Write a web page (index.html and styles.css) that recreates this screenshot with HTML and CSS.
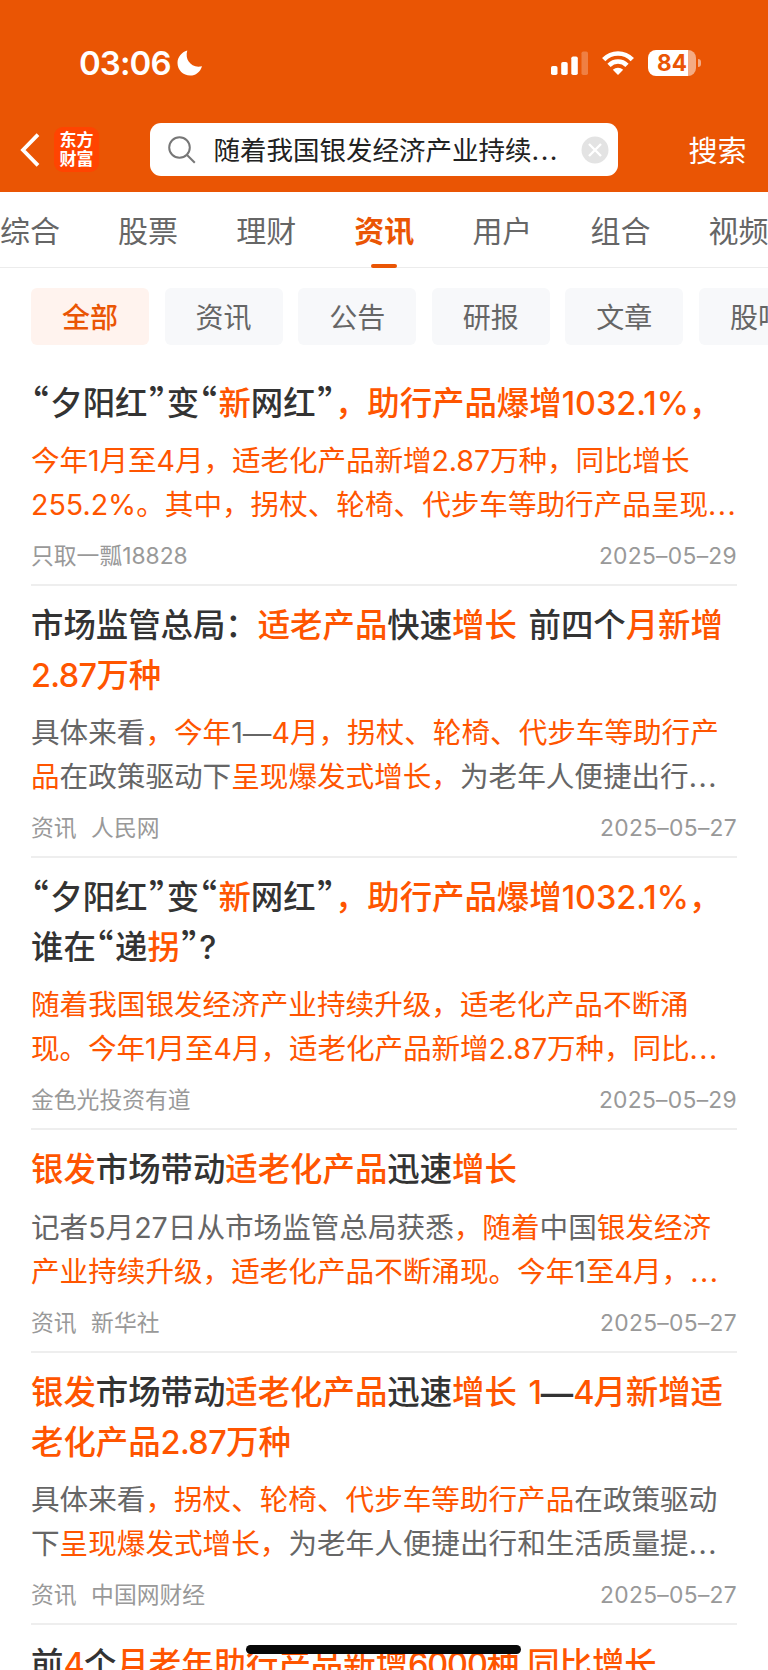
FILE: index.html
```html
<!DOCTYPE html>
<html lang="zh-CN">
<head>
<meta charset="utf-8">
<title>搜索资讯</title>
<link rel="stylesheet" href="styles.css">
</head>
<body>
<div class="screen">
<header class="header">
  <div class="status">
    <span class="clock">03:06</span>
    <svg class="moon" width="26" height="26" viewBox="0 0 26 26"><path d="M10.300.6C7.400 9.800 14.500 18.800 25 16.200 23.300 22 18.700 25.500 13.200 25.500 6.200 25.500.5 20 .5 13 .5 7.300 4.500 2.300 10.300.6Z" fill="#fff"/></svg>
    <svg class="signal" width="38" height="24" viewBox="0 0 38 24" fill="#fff"><rect x="0" y="15" width="6.500" height="9" rx="1.800"/><rect x="10.200" y="11" width="6.500" height="13" rx="1.800"/><rect x="20.300" y="5.500" width="6.500" height="18.500" rx="1.800"/><rect x="30.500" y="0.500" width="6.500" height="23.500" rx="1.800" opacity=".25"/></svg>
    <svg class="wifi" width="32" height="24" viewBox="0 0 32 24" fill="none" stroke="#fff" stroke-width="4.600"><path d="M1.700 8.700C9.700.5 22.300.5 30.300 8.700"/><path d="M7 14.300c5.200-5.100 12.800-5.100 18 0"/><path d="M16 24l-5.200-5.200c3-2.800 7.400-2.800 10.400 0Z" fill="#fff" stroke="none"/></svg>
    <div class="battery"><span class="battery-body">84</span><span class="battery-cap"></span></div>
  </div>
  <div class="searchbar">
    <svg class="back" width="20" height="34" viewBox="0 0 20 34" fill="none" stroke="#fff" stroke-width="3.800"><path d="M18 1.700 3 17l15 15.300"/></svg>
    <div class="logo"><span>东方</span><span>财富</span></div>
    <div class="field">
      <svg class="magnifier" width="28" height="28" viewBox="0 0 28 28" fill="none" stroke="#777" stroke-width="2"><circle cx="11.500" cy="11.500" r="10.300"/><path d="m18.800 18.800 8 8"/></svg>
      <span class="query">随着我国银发经济产业持续<span class="dots">...</span></span>
      <svg class="clear" width="28" height="28" viewBox="0 0 28 28"><circle cx="14" cy="14" r="13.500" fill="#e3e3e3"/><path d="m8 8 12 12M20 8 8 20" stroke="#fff" stroke-width="2.400"/></svg>
    </div>
    <span class="go">搜索</span>
  </div>
</header>
<nav class="tabs"><span>综合</span><span>股票</span><span>理财</span><span class="on">资讯</span><span>用户</span><span>组合</span><span>视频</span></nav>
<div class="chips"><span class="on">全部</span><span>资讯</span><span>公告</span><span>研报</span><span>文章</span><span>股吧</span></div>
<main class="list">
  <article>
    <h2><span><q class="open">“</q>夕阳红<q>”</q>变<q class="open">“</q><em>新</em>网红<q>”</q><em>，助行产品爆增1032.1%，</em></span></h2>
    <p><span class="tight"><em>今年1月至4月，适老化产品新增2.87万种，同比增长</em></span><span><em>255.2%。其中，拐杖、轮椅、代步车等助行产品呈现<i>...</i></em></span></p>
    <footer><span>只取一瓢18828</span><time>2025–05–29</time></footer>
  </article>
  <article>
    <h2><span>市场监管总局：<em>适老产品</em>快速<em>增长</em> 前四个<em>月新增</em></span><span><em><u>2.87</u>万种</em></span></h2>
    <p><span>具体来看<em>，今年</em>1<b>—</b><em>4月，拐杖、轮椅、代步车等助行产</em></span><span><em>品</em>在政策驱动下<em>呈现爆发式增长，</em>为老年人便捷出行<i>...</i></span></p>
    <footer><span>资讯<s></s>人民网</span><time>2025–05–27</time></footer>
  </article>
  <article>
    <h2><span><q class="open">“</q>夕阳红<q>”</q>变<q class="open">“</q><em>新</em>网红<q>”</q><em>，助行产品爆增1032.1%，</em></span><span>谁在<q class="open">“</q>递<em>拐</em><q>”</q>?</span></h2>
    <p><span><em>随着我国银发经济产业持续升级，适老化产品不断涌</em></span><span class="tight"><em>现。今年1月至4月，适老化产品新增2.87万种，同比<i>...</i></em></span></p>
    <footer><span>金色光投资有道</span><time>2025–05–29</time></footer>
  </article>
  <article>
    <h2><span><em>银发</em>市场带动<em>适老化产品</em>迅速<em>增长</em></span></h2>
    <p><span>记者5月27日从市场监管总局获悉<em>，随着</em>中国<em>银发经济</em></span><span><em>产业持续升级，适老化产品不断涌现。今年</em>1<em>至4月，<i>...</i></em></span></p>
    <footer><span>资讯<s></s>新华社</span><time>2025–05–27</time></footer>
  </article>
  <article>
    <h2><span><em>银发</em>市场带动<em>适老化产品</em>迅速<em>增长 <u class="narrow">1</u></em><b>—</b><em><u class="narrow">4</u>月新增适</em></span><span><em>老化产品<u>2.87</u>万种</em></span></h2>
    <p><span>具体来看<em>，拐杖、轮椅、代步车等助行产品</em>在政策驱动</span><span>下<em>呈现爆发式增长，</em>为老年人便捷出行和生活质量提<i>...</i></span></p>
    <footer><span>资讯<s></s>中国网财经</span><time>2025–05–27</time></footer>
  </article>
  <article>
    <h2><span>前<em><u>4</u></em>个<em>月老年助行产品新增<u class="narrow">6000</u>种<u> </u>同比增长</em></span></h2>
  </article>
</main>
<div class="home"></div>
</div>
</body>
</html>
```
FILE: styles.css
```css
* { box-sizing: border-box; }
body { margin: 0; background: #fff; font-family: Inter, "Noto Sans CJK SC", sans-serif; }
.screen { position: relative; width: 768px; height: 1670px; overflow: hidden; }
.header { height: 192px; background: #ea5504; color: #fff; }
.status { display: flex; align-items: center; height: 123px; padding: 3px 67px 0 79px; }
.clock { font-size: 33px; font-weight: 600; width: 93px; white-space: nowrap; letter-spacing: -.9px; }
.moon { margin-left: 5px; }
.signal { margin-left: auto; }
.wifi { margin-left: 13px; }
.battery { display: flex; align-items: center; gap: 2px; margin-left: 14px; }
.battery-body { width: 48px; height: 26px; border-radius: 8px; line-height: 26px; text-align: center; font-size: 22.500px; font-weight: 700; color: #ea5504; background: linear-gradient(to right, #fff 40px, #f4ab84 40px); }
.battery-cap { width: 3px; height: 8px; border-radius: 0 3px 3px 0; background: #f4ab84; }
.searchbar { display: flex; align-items: center; height: 53px; padding: 0 21.500px 0 20px; }
.back { flex: none; }
.logo { flex: none; width: 45px; height: 45px; margin-left: 14px; padding-top: 3px; border-radius: 9px; background: #ff4401; display: flex; flex-direction: column; align-items: center; font: 700 17px/18.500px "Noto Sans CJK SC", sans-serif; }
.field { display: flex; align-items: center; width: 468px; height: 53px; margin-left: 51px; padding: 0 9px 0 18px; border-radius: 11px; background: #fff; color: #222; }
.query { flex: 1; margin-left: 17.500px; font-size: 26.500px; line-height: 53px; padding-top: 2px; white-space: nowrap; }
.dots { letter-spacing: 1.500px; }
.go { margin: -2px 0 0 auto; font-size: 29px; white-space: nowrap; }
.tabs { display: flex; gap: 58.100px; height: 76px; border-bottom: 1px solid #ececec; font-size: 30px; line-height: 78px; color: #666; white-space: nowrap; }
.tabs span { flex: none; position: relative; }
.tabs .on { color: #ea5504; font-weight: 700; }
.tabs .on::after { content: ""; position: absolute; left: 16.500px; top: 72px; width: 26px; height: 4px; border-radius: 2px; background: #ea5504; }
.chips { display: flex; gap: 15.600px; padding: 20px 0 0 31px; }
.chips span { flex: none; width: 118px; height: 57px; border-radius: 6px; background: #f7f8fa; color: #666; font-size: 28px; line-height: 60px; text-align: center; }
.chips .on { background: #fff3ee; color: #ea5504; font-weight: 500; }
.list { margin-top: 18px; padding: 0 31px; }
article { border-bottom: 2px solid #eee; padding: 15.500px 0 13px; }
h2, p { margin: 0; }
h2 span, p > span { display: block; white-space: nowrap; }
h2 span { height: 49.300px; }
p > span { height: 43.800px; }
h2 { color: #333; font-size: 32.400px; font-weight: 500; line-height: 50px; word-spacing: 3px; }
em { font-style: normal; color: #ff5500; }
b { font-weight: inherit; font-family: "Liberation Sans", sans-serif; line-height: 1; }
h2 b { font-weight: 700; }
i { font-style: normal; letter-spacing: 1.500px; }
u { text-decoration: none; letter-spacing: -.6px; word-spacing: 0; }
u.narrow { letter-spacing: -1.100px; }
q { display: inline-flex; width: 19.300px; padding-left: 1.500px; line-height: 1; font-size: 36px; font-family: "Noto Sans CJK SC", sans-serif; margin: -4px 0; transform: translateY(1.500px); }
q.open { justify-content: flex-end; padding: 0 1.500px 0 0; }
q::before, q::after { content: none; }
p { margin-top: 11.500px; color: #666; font-size: 28.600px; line-height: 43.800px; }
.tight { letter-spacing: -.09px; }
footer { display: flex; justify-content: space-between; margin-top: 13.900px; color: #999; font-size: 22.800px; line-height: 30px; white-space: nowrap; }
time { letter-spacing: .3px; }
s { display: inline-block; width: 14.500px; }
.home { position: absolute; left: 246px; bottom: 16px; width: 275px; height: 9px; border-radius: 5px; background: #080808; }
```
